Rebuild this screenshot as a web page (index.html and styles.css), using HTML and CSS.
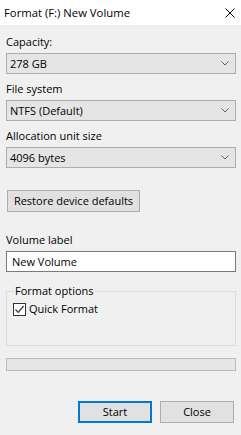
FILE: index.html
```html
<!DOCTYPE html>
<html lang="en">
<head>
    <meta charset="UTF-8">
    <meta name="viewport" content="width=device-width, initial-scale=1.0">
    <title>Format (F:) New Volume</title>
    <link rel="stylesheet" href="styles.css">
</head>
<body>
    <div class="window">
        <div class="title-bar">
            <span class="title">Format (F:) New Volume</span>
            <svg class="close-icon" width="10" height="10" viewBox="0 0 10 10">
                <path d="M0.5 0.5 L9.5 9.5 M9.5 0.5 L0.5 9.5" stroke="#000" stroke-width="1" fill="none"/>
            </svg>
        </div>

        <div class="content">
            <div class="field">
                <label class="field-label">Capacity:</label>
                <div class="combo">
                    <span>278 GB</span>
                    <svg class="chevron" width="8" height="5" viewBox="0 0 8 5"><path d="M0.5 0.5 L4 4 L7.5 0.5" stroke="#606060" fill="none"/></svg>
                </div>
            </div>

            <div class="field">
                <label class="field-label">File system</label>
                <div class="combo">
                    <span>NTFS (Default)</span>
                    <svg class="chevron" width="8" height="5" viewBox="0 0 8 5"><path d="M0.5 0.5 L4 4 L7.5 0.5" stroke="#606060" fill="none"/></svg>
                </div>
            </div>

            <div class="field">
                <label class="field-label">Allocation unit size</label>
                <div class="combo">
                    <span>4096 bytes</span>
                    <svg class="chevron" width="8" height="5" viewBox="0 0 8 5"><path d="M0.5 0.5 L4 4 L7.5 0.5" stroke="#606060" fill="none"/></svg>
                </div>
            </div>

            <button class="btn restore-btn">Restore device defaults</button>

            <div class="field volume-field">
                <label class="field-label">Volume label</label>
                <div class="text-box">New Volume</div>
            </div>

            <fieldset class="group">
                <legend>Format options</legend>
                <div class="check-row">
                    <span class="check-box">
                        <svg width="11" height="11" viewBox="0 0 11 11"><path d="M1.5 5.5 L4.2 8.3 L9.6 2" stroke="#333" stroke-width="1.2" fill="none"/></svg>
                    </span>
                    <span>Quick Format</span>
                </div>
            </fieldset>

            <div class="progress"></div>

            <div class="actions">
                <button class="btn btn-default">Start</button>
                <button class="btn">Close</button>
            </div>
        </div>
    </div>
</body>
</html>
```

FILE: styles.css
```css
/* Basic Reset */
* {
    margin: 0;
    padding: 0;
    box-sizing: border-box;
}

body {
    font-family: 'Open Sans', 'Noto Sans', sans-serif;
    font-size: 11px;
    color: #000;
    background: #f0f0f0;
    width: 241px;
    height: 435px;
    overflow: hidden;
}

.title-bar {
    height: 25px;
    background: #ffffff;
    display: flex;
    justify-content: space-between;
    align-items: center;
    padding: 0 5px 0 4px;
}

.title {
    font-size: 11.3px;
    line-height: 16px;
}

.close-icon {
    margin-right: 1px;
}

.content {
    padding: 9px 5px 0 6px;
}

.field {
    margin-bottom: 7px;
}

.field-label {
    display: block;
    line-height: 16px;
    margin-bottom: 3px;
}

.combo {
    height: 21px;
    background: #e5e5e5;
    border: 1px solid #adadad;
    display: flex;
    align-items: center;
    justify-content: space-between;
    padding: 0 6px 0 3px;
    line-height: 16px;
}

.chevron {
    display: block;
}

.btn {
    font-family: inherit;
    font-size: 11px;
    color: #000;
    height: 22px;
    background: #e1e1e1;
    border: 1px solid #adadad;
    line-height: 16px;
}

.restore-btn {
    display: block;
    width: 133px;
    margin: 22px 0 0 1px;
}

.volume-field {
    margin-top: 20px;
}

.text-box {
    height: 21px;
    background: #ffffff;
    border: 1px solid #7a7a7a;
    padding: 0 5px;
    line-height: 19px;
}

.group {
    border: 1px solid #dcdcdc;
    height: 63px;
    margin-top: 11px;
    padding: 2px 6px 0 6px;
}

.group legend {
    padding: 0 1px;
    margin-left: 1px;
    line-height: 16px;
}

.check-row {
    display: flex;
    align-items: center;
    gap: 3px;
    line-height: 16px;
}

.check-box {
    width: 13px;
    height: 13px;
    border: 1px solid #333333;
    background: #ffffff;
    display: flex;
    align-items: center;
    justify-content: center;
}

.check-box svg {
    display: block;
}

.progress {
    height: 13px;
    margin-top: 12px;
    background: #e6e6e6;
    border: 1px solid #bcbcbc;
}

.actions {
    display: flex;
    justify-content: flex-end;
    gap: 8px;
    margin-top: 30px;
    padding-right: 2px;
}

.actions .btn {
    width: 74px;
}

.btn-default {
    border: 2px solid #0078d7;
}
```
